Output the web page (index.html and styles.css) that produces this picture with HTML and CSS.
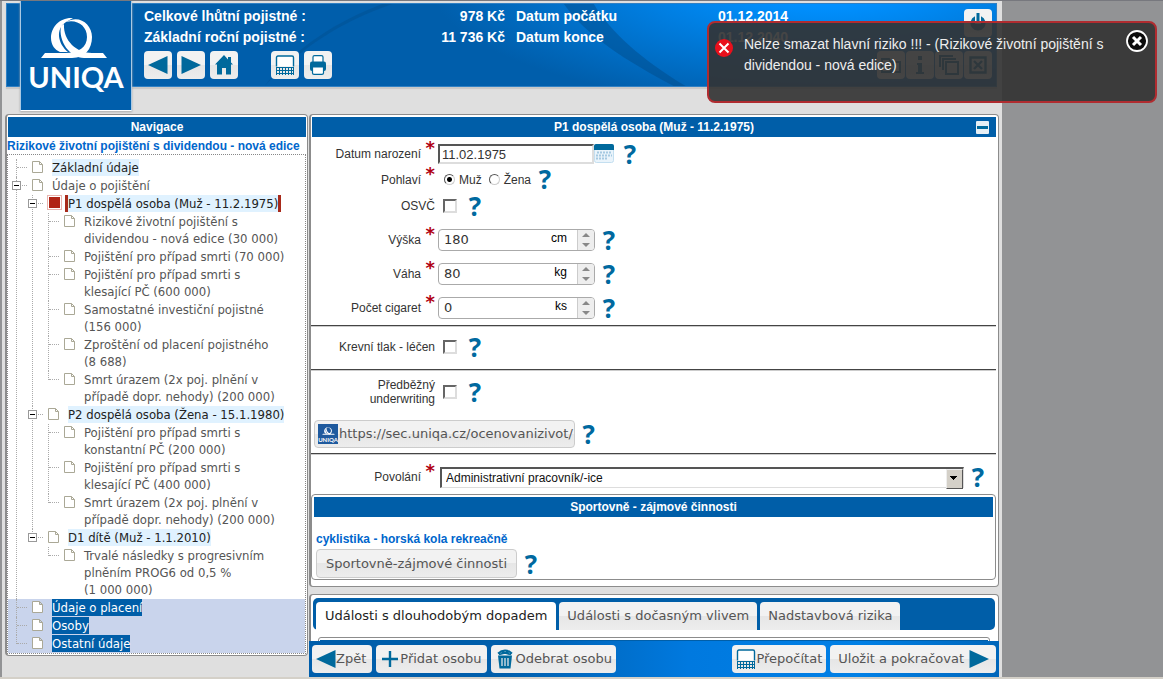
FILE: index.html
```html
<!DOCTYPE html>
<html lang="cs">
<head>
<meta charset="utf-8">
<title>UNIQA – Rizikové životní pojištění</title>
<link rel="stylesheet" href="styles.css">
</head>
<body>
<svg class="defs" aria-hidden="true">
  <symbol id="doc" viewBox="0 0 12 12"><path d="M.5 .5H7.500L10.500 3.500V11.500H.5ZM7.500 .5V3.500H10.500" fill="#fff" stroke="#aaa896"/></symbol>
  <symbol id="grid" viewBox="0 0 20 20"><path d="M1.500 11.500V2.500Q1.500 1 3 1H17Q18.500 1 18.500 2.500V11.500" fill="#fff" stroke="#00699c" stroke-width="1.400"/><path d="M1 12.500H19M1 15.500H19M1 18.500H19M1.500 12V20M4.500 12V20M7.500 12V20M10.500 12V20M13.500 12V20M16.500 12V20M18.500 12V20" stroke="#00699c"/></symbol>
  <symbol id="left" viewBox="0 0 20 20"><path d="M0 10L19.500 1V19Z" fill="#00699c"/></symbol>
  <symbol id="right" viewBox="0 0 20 20"><path d="M20 10L.5 1V19Z" fill="#00699c"/></symbol>
  <symbol id="loop" viewBox="0 0 66 42"><path d="M25 5C38-3 51 7 51 20C51 32 44 41 31 41H0L4 36H24C38 36 46 30 46 20C46 9 36 2 25 5Z"/><path d="M32 1C19 0 10 10 10 21C10 28 14 33 19 35L27 35C17 27 14 12 25 5Z"/><path d="M20 9C17 24 29 41 43 41H66L62 36H51C36 36 22 24 23 7Z"/></symbol>
</svg>

<div class="shell">
  <header class="header">
    <svg class="swoosh" viewBox="0 0 991 84" preserveAspectRatio="none" aria-hidden="true">
      <path d="M558 0H588C604 28 637 58 680 84H668C620 58 580 32 558 0Z" fill="#004a86" opacity=".45"/>
      <path d="M258 84C296 44 335 18 386 0H376C330 18 290 44 258 84Z" fill="#004a86" opacity=".35"/>
    </svg>
    <a class="logo" href="#" aria-label="UNIQA">
      <svg viewBox="0 0 110 109"><use href="#loop" x="20" y="16" width="66" height="42" fill="#fff"/><text x="55" y="87" text-anchor="middle" class="logo-text">UNIQA</text></svg>
    </a>
    <div class="header-main">
      <div class="summary">
        <span>Celkové lhůtní pojistné :</span><span class="amount">978 Kč</span><span>Datum počátku</span><span>01.12.2014</span>
        <span>Základní roční pojistné :</span><span class="amount">11 736 Kč</span><span>Datum konce</span><span>01.12.2040</span>
      </div>
      <div class="tools">
        <button class="btn icon-btn" aria-label="Zpět"><svg class="ico"><use href="#left"/></svg></button>
        <button class="btn icon-btn" aria-label="Vpřed"><svg class="ico"><use href="#right"/></svg></button>
        <button class="btn icon-btn" aria-label="Domů"><svg class="ico" viewBox="0 0 20 20"><path d="M10 0L1 9.500H3V19.500H8V13H12V19.500H17V9.500H19L17 7.500V2H14V4.500Z" fill="#00699c"/></svg></button>
        <button class="btn icon-btn spaced" aria-label="Kalkulačka"><svg class="ico"><use href="#grid"/></svg></button>
        <button class="btn icon-btn" aria-label="Tisk"><svg class="ico" viewBox="0 0 20 20"><path d="M5 7V2Q5 .7 6.500 .7H13.500Q15 .7 15 2V7" fill="#fff" stroke="#00699c" stroke-width="1.200"/><path d="M2 8.500Q2 6.500 4 6.500H16Q18 6.500 18 8.500V14Q18 16 16 16H4Q2 16 2 14Z" fill="#00699c"/><path d="M4.500 12H15.500V18Q15.500 19.300 14 19.300H6Q4.500 19.300 4.500 18Z" fill="#fff" stroke="#00699c" stroke-width="1.200"/></svg></button>
      </div>
    </div>
    <div class="corner">
      <button class="btn icon-btn" aria-label="Odhlásit"><svg class="ico" viewBox="0 0 20 20"><path d="M7 3.200A7.500 7.500 0 1 0 13 3.200V11H7Z" fill="#00699c"/><path d="M10 0V10" stroke="#00699c" stroke-width="3"/></svg></button>
      <div class="corner-row">
        <button class="btn icon-btn" aria-label="Složka"><svg class="ico" viewBox="0 0 20 20"><path d="M1 4H8L10 7H19V17H1Z" fill="none" stroke="#00699c" stroke-width="2"/><circle cx="11" cy="12" r="3" fill="none" stroke="#00699c" stroke-width="2"/></svg></button>
        <button class="btn icon-btn" aria-label="Informace"><svg class="ico" viewBox="0 0 20 20"><path d="M7 8H12V17H14V19H6V17H8V10H7ZM8 1H12V5H8Z" fill="#00699c"/></svg></button>
        <button class="btn icon-btn" aria-label="Kopie"><svg class="ico" viewBox="0 0 20 20"><path d="M1 12V1H14M4 15V4H17M7 7H19V19H7Z" fill="none" stroke="#00699c" stroke-width="2"/></svg></button>
        <button class="btn icon-btn" aria-label="Zavřít"><svg class="ico" viewBox="0 0 20 20"><path d="M2.500 2.500H17.500V17.500H2.500ZM6 6L14 14M14 6L6 14" fill="none" stroke="#00699c" stroke-width="2.400"/></svg></button>
      </div>
    </div>
  </header>

  <div class="columns">
    <nav class="panel nav">
      <h2 class="bar">Navigace</h2>
      <p class="product">Rizikové životní pojištění s dividendou - nová edice</p>
      <ul class="tree">
        <li><div class="row"><svg class="doc"><use href="#doc"/></svg><a class="hl" href="#">Základní údaje</a></div></li>
        <li><div class="row"><button class="toggle" aria-label="Sbalit"></button><svg class="doc"><use href="#doc"/></svg><a href="#">Údaje o pojištění</a></div>
          <ul>
            <li><div class="row"><button class="toggle" aria-label="Sbalit"></button><span class="mark"></span><a class="hl current" href="#">P1 dospělá osoba (Muž - 11.2.1975)</a></div>
              <ul>
                <li><div class="row"><svg class="doc"><use href="#doc"/></svg><a href="#">Rizikové životní pojištění s<br>dividendou - nová edice (30 000)</a></div></li>
                <li><div class="row"><svg class="doc"><use href="#doc"/></svg><a href="#">Pojištění pro případ smrti (70 000)</a></div></li>
                <li><div class="row"><svg class="doc"><use href="#doc"/></svg><a href="#">Pojištění pro případ smrti s<br>klesající PČ (600 000)</a></div></li>
                <li><div class="row"><svg class="doc"><use href="#doc"/></svg><a href="#">Samostatné investiční pojistné<br>(156 000)</a></div></li>
                <li><div class="row"><svg class="doc"><use href="#doc"/></svg><a href="#">Zproštění od placení pojistného<br>(8 688)</a></div></li>
                <li><div class="row"><svg class="doc"><use href="#doc"/></svg><a href="#">Smrt úrazem (2x poj. plnění v<br>případě dopr. nehody) (200 000)</a></div></li>
              </ul>
            </li>
            <li><div class="row"><button class="toggle" aria-label="Sbalit"></button><svg class="doc"><use href="#doc"/></svg><a class="hl" href="#">P2 dospělá osoba (Žena - 15.1.1980)</a></div>
              <ul>
                <li><div class="row"><svg class="doc"><use href="#doc"/></svg><a href="#">Pojištění pro případ smrti s<br>konstantní PČ (200 000)</a></div></li>
                <li><div class="row"><svg class="doc"><use href="#doc"/></svg><a href="#">Pojištění pro případ smrti s<br>klesající PČ (400 000)</a></div></li>
                <li><div class="row"><svg class="doc"><use href="#doc"/></svg><a href="#">Smrt úrazem (2x poj. plnění v<br>případě dopr. nehody) (200 000)</a></div></li>
              </ul>
            </li>
            <li><div class="row"><button class="toggle" aria-label="Sbalit"></button><svg class="doc"><use href="#doc"/></svg><a class="hl" href="#">D1 dítě (Muž - 1.1.2010)</a></div>
              <ul>
                <li><div class="row"><svg class="doc"><use href="#doc"/></svg><a href="#">Trvalé následky s progresivním<br>plněním PROG6 od 0,5 %<br>(1 000 000)</a></div></li>
              </ul>
            </li>
          </ul>
        </li>
        <li class="picked"><div class="row"><svg class="doc"><use href="#doc"/></svg><a href="#">Údaje o placení</a></div></li>
        <li class="picked"><div class="row"><svg class="doc"><use href="#doc"/></svg><a href="#">Osoby</a></div></li>
        <li class="picked"><div class="row"><svg class="doc"><use href="#doc"/></svg><a href="#">Ostatní údaje</a></div></li>
      </ul>
    </nav>

    <main class="main">
      <div class="scroll">
        <section class="panel person">
          <h2 class="bar">P1 dospělá osoba (Muž - 11.2.1975)<button class="collapse" aria-label="Sbalit"></button></h2>
          <form class="form">
            <div class="field birth"><label for="birth">Datum narození<b class="req">*</b></label>
              <input class="sunken date" id="birth" type="text" value="11.02.1975">
              <button type="button" class="plain cal" aria-label="Kalendář"><svg width="20" height="20" viewBox="0 0 20 20"><rect x=".5" y=".5" width="19" height="18" rx="2" fill="#eaf4fb" stroke="#c4dff0"/><path d="M0 6V2Q0 0 2 0H18Q20 0 20 2V6Z" fill="#00699c"/><path d="M3 8.500H18M2 11.500H18M2 14.500H14" stroke="#a5c9e2" stroke-width="2" stroke-dasharray="2 1"/></svg></button>
              <button type="button" class="help" aria-label="Nápověda">?</button></div>
            <div class="field sex"><span class="label">Pohlaví<b class="req">*</b></span>
              <label class="opt"><input type="radio" name="sex" checked>Muž</label>
              <label class="opt"><input type="radio" name="sex">Žena</label>
              <button type="button" class="help" aria-label="Nápověda">?</button></div>
            <div class="field"><label for="osvc">OSVČ</label><input type="checkbox" id="osvc"><button type="button" class="help" aria-label="Nápověda">?</button></div>
            <div class="field"><label for="height">Výška<b class="req">*</b></label>
              <span class="spin"><input id="height" type="text" value="180"><span class="unit">cm</span><span class="steps"><button type="button" aria-label="Více"></button><button type="button" class="down" aria-label="Méně"></button></span></span>
              <button type="button" class="help" aria-label="Nápověda">?</button></div>
            <div class="field"><label for="weight">Váha<b class="req">*</b></label>
              <span class="spin"><input id="weight" type="text" value="80"><span class="unit">kg</span><span class="steps"><button type="button" aria-label="Více"></button><button type="button" class="down" aria-label="Méně"></button></span></span>
              <button type="button" class="help" aria-label="Nápověda">?</button></div>
            <div class="field"><label for="cig">Počet cigaret<b class="req">*</b></label>
              <span class="spin"><input id="cig" type="text" value="0"><span class="unit">ks</span><span class="steps"><button type="button" aria-label="Více"></button><button type="button" class="down" aria-label="Méně"></button></span></span>
              <button type="button" class="help" aria-label="Nápověda">?</button></div>
            <hr>
            <div class="field tall pressure"><label for="bp">Krevní tlak - léčen</label><input type="checkbox" id="bp"><button type="button" class="help" aria-label="Nápověda">?</button></div>
            <hr>
            <div class="field tall"><label for="uw">Předběžný underwriting</label><input type="checkbox" id="uw"><button type="button" class="help" aria-label="Nápověda">?</button></div>
            <div class="link-row">
              <button type="button" class="btn bordered url"><svg width="20" height="20" viewBox="0 0 20 20"><rect width="20" height="20" fill="#1f5a9e"/><use href="#loop" x="4" y="3" width="13" height="8" fill="#fff"/><text x="10" y="18" text-anchor="middle" class="mini-text">UNIQA</text></svg>https://sec.uniqa.cz/ocenovanizivot/</button>
              <button type="button" class="help" aria-label="Nápověda">?</button></div>
            <hr>
            <div class="field job"><label for="job">Povolání<b class="req">*</b></label>
              <span class="select-box"><select class="sunken" id="job"><option>Administrativní pracovník/-ice</option></select></span>
              <button type="button" class="help" aria-label="Nápověda">?</button></div>
          </form>
          <section class="panel sports">
            <h3 class="bar">Sportovně - zájmové činnosti</h3>
            <p>cyklistika - horská kola rekreačně</p>
            <div class="sports-row"><button class="btn bordered wide">Sportovně-zájmové činnosti</button><button class="help" aria-label="Nápověda">?</button></div>
          </section>
        </section>
        <section class="panel events">
          <div class="tabs" role="tablist">
            <button class="btn tab active" role="tab" aria-selected="true">Události s dlouhodobým dopadem</button>
            <button class="btn tab" role="tab">Události s dočasným vlivem</button>
            <button class="btn tab" role="tab">Nadstavbová rizika</button>
          </div>
          <div class="panel inner"><div class="bar"></div></div>
        </section>
      </div>
      <footer class="actions">
        <button class="btn back"><svg class="ico"><use href="#left"/></svg>Zpět</button>
        <button class="btn back"><svg class="ico" viewBox="0 0 20 20"><path d="M10 2V18M2 10H18" stroke="#00699c" stroke-width="2.400"/></svg>Přidat osobu</button>
        <button class="btn"><svg class="ico" viewBox="0 0 20 20"><path d="M3 6.500H17L15.500 19.500H4.500Z" fill="#00699c"/><path d="M3 4.500Q10-1.500 17 4.500M5 2.500L16 5.500M15 2.500L4 5.500" fill="none" stroke="#00699c" stroke-width="1.800"/><path d="M7 9V17M10 9V17M13 9V17" stroke="#eee" stroke-width="1.200"/></svg>Odebrat osobu</button>
        <button class="btn push"><svg class="ico"><use href="#grid"/></svg>Přepočítat</button>
        <button class="btn save">Uložit a pokračovat<svg class="ico"><use href="#right"/></svg></button>
      </footer>
    </main>
  </div>
</div>

<div class="toast" role="alert">
  <svg class="error" viewBox="0 0 18 18"><circle cx="9" cy="9" r="9" fill="#e9101c"/><path d="M4.500 4.500L13.500 13.500M13.500 4.500L4.500 13.500" stroke="#fff" stroke-width="2"/></svg>
  <p>Nelze smazat hlavní riziko !!! - (Rizikové životní pojištění s dividendou - nová edice)</p>
  <button class="plain close" aria-label="Zavřít"><svg width="22" height="22" viewBox="0 0 22 22"><circle cx="11" cy="11" r="10" fill="#0c0c0c" stroke="#fff" stroke-width="1.800"/><path d="M7 7L15 15M15 7L7 15" stroke="#fff" stroke-width="3"/></svg></button>
</div>
</body>
</html>
```
FILE: styles.css
```css
* { box-sizing: border-box; }
body {
  margin: 0;
  height: 100vh;
  overflow: hidden;
  position: relative;
  display: flex;
  border-top: 1px solid #77787e;
  border-bottom: 2px solid #d4d0c8;
  background: #929395;
  font: 12px/14px "Liberation Sans", Arial, sans-serif;
  color: #333;
}
h2, h3, p, ul { margin: 0; padding: 0; }
button, input, select { font: inherit; color: inherit; }
.defs { position: absolute; width: 0; height: 0; }

.shell {
  flex: 1;
  max-width: 1000px;
  margin-left: 2px;
  padding: 2px 3px 0;
  display: flex;
  flex-direction: column;
  background: #dfdfdf;
}

/* Header */
.header {
  position: relative;
  display: flex;
  flex: none;
  min-height: 84px;
  margin: 0 2px 27px 1px;
  padding: 2px 4px 5px 137px;
  border: 1px solid #2f80c4;
  background: radial-gradient(ellipse 400px 130px at 83% -30%, #0090ff 20%, #005eab 100%);
  box-shadow: 0 2px 1px #c8c8c8;
}
.swoosh { position: absolute; inset: 0; width: 100%; height: 100%; }
.logo {
  position: absolute;
  left: 13px;
  top: -3px;
  width: 112px;
  height: 110px;
  border: 1px solid #a9c9e4;
  border-bottom-color: #fff;
  border-top: 0;
  background: #005eab;
  box-shadow: 0 1px 2px #aaa;
}
.logo svg { display: block; width: 100%; }
.logo-text { font: 700 29px Lato, sans-serif; fill: #fff; }
.mini-text { font: 700 6px Lato, sans-serif; fill: #fff; }
.header-main { position: relative; flex: 1; }
.summary {
  display: grid;
  grid-template-columns: 180px 170px 191px 1fr;
  column-gap: 11px;
  font-size: 14px;
  font-weight: 700;
  line-height: 21px;
  color: #fff;
}
.amount { text-align: right; }
.tools { display: flex; gap: 5px; margin-top: 3px; }
.spaced { margin-left: 28px; }
.corner {
  position: relative;
  display: flex;
  flex-direction: column;
  justify-content: space-between;
  align-items: flex-end;
  padding: 3px 0 2px;
}
.corner-row { display: flex; gap: 1px; }

/* Buttons */
.btn {
  display: flex;
  align-items: center;
  height: 28px;
  padding: 0 5px;
  border: 0;
  border-radius: 4px;
  background: linear-gradient(#f2f2f2 50%, #e6e6e6 50%, #ededed);
  font: 13px/16px "DejaVu Sans", Verdana, sans-serif;
  color: #555;
  white-space: nowrap;
}
.icon-btn { width: 28px; padding: 0; justify-content: center; }
.ico { width: 20px; height: 20px; flex: none; }
.bordered { border: 1px solid #ccc; }
.plain { padding: 0; border: 0; background: none; }
.plain svg { display: block; }
.help {
  width: 18px;
  padding: 0;
  border: 0;
  background: none;
  font: 700 26px/26px "Open Sans", sans-serif;
  color: #00699f;
}

/* Panels */
.columns {
  flex: 1;
  min-height: 0;
  display: grid;
  grid-template-columns: 303px minmax(0, 1fr);
  gap: 1px;
  align-items: start;
}
.panel {
  border: 1px solid #8c8c8c;
  border-left-width: 2px;
  border-radius: 4px;
  background: #fff;
}
.bar {
  position: relative;
  min-height: 20px;
  background: #005ea8;
  font-size: 12px;
  font-weight: 700;
  line-height: 20px;
  text-align: center;
  color: #fff;
}
.collapse {
  position: absolute;
  right: 7px;
  top: 4px;
  width: 13px;
  height: 13px;
  padding: 0;
  border: solid #e6eff5;
  border-width: 5px 1px;
  border-radius: 1px;
  background: #00699c;
}

/* Navigation tree */
.nav { padding: 2px 1px 1px 0; }
.nav .bar { margin-left: 1px; }
.product { padding-top: 1px; font-weight: 700; line-height: 16px; color: #0066cc; white-space: nowrap; }
.tree {
  border: 1px dotted #888;
  padding-top: 4px;
  font: 13px/17px "DejaVu Sans Condensed", Tahoma, sans-serif;
  color: #555;
}
.tree li { position: relative; list-style: none; }
.tree ul { padding-left: 16px; }
.tree li::before {
  content: "";
  position: absolute;
  left: 8px;
  top: 0;
  height: 100%;
  border-left: 1px dotted #aaa;
}
.tree li:last-child::before { height: 9px; }
.tree li::after {
  content: "";
  position: absolute;
  left: 9px;
  top: 8px;
  width: 10px;
  border-top: 1px dotted #aaa;
}
.row { display: flex; align-items: flex-start; padding: 0 0 1px 24px; white-space: nowrap; }
.doc { width: 12px; height: 12px; margin: 2px 8px 0 0; flex: none; }
.tree a { color: inherit; text-decoration: none; }
.tree .hl { background: #e0f2ff; color: #222; }
.tree .current {
  margin-left: -3px;
  border: solid #a82a1a;
  border-width: 0 3px;
}
.mark {
  width: 15px;
  height: 15px;
  margin: 0 6px 0 -1px;
  border: 1px solid #e8b4ae;
  background: #b02416;
  box-shadow: inset 0 0 0 1px #fff;
}
.toggle {
  position: absolute;
  z-index: 1;
  left: 4px;
  top: 4px;
  width: 9px;
  height: 9px;
  padding: 0;
  border: 1px solid #999;
  background: linear-gradient(#000, #000) center / 5px 1px no-repeat #fff;
}
.tree .picked { background: #c9d4ec; }
.tree .picked a { background: #005ea8; color: #fff; }

/* Form */
.main { display: flex; flex-direction: column; height: 100%; min-height: 0; }
.scroll { flex: 1; min-height: 0; overflow: hidden; }
.person { padding: 2px 2px 6px 1px; }
.form { padding-top: 1px; }
.field { display: flex; align-items: center; min-height: 34px; }
.field > label:first-child, .label {
  display: flex;
  justify-content: flex-end;
  width: 123px;
  margin-right: 3px;
  text-align: right;
  flex: none;
}
.req {
  height: 14px;
  margin: -5px 0 5px 4px;
  width: 10px;
  font: 700 18px/12px "DejaVu Sans", sans-serif;
  color: #b00012;
}
.birth { min-height: 32px; }
.sex { min-height: 19px; }
.sex .help { line-height: 19px; }
.sunken {
  height: 20px;
  border: 2px solid;
  border-color: #555 #ddd #ddd #555;
  border-radius: 0;
  background: #fff;
}
.date { width: 156px; padding: 0 2px; font-size: 13px; }
.cal { margin-right: 7px; }
.opt { display: flex; align-items: center; gap: 4px; margin-right: 7px; }
.opt input, .field > input[type="checkbox"] { appearance: none; flex: none; margin: 0; background: #fff; }
.opt input {
  width: 11px;
  height: 11px;
  border: 1px solid;
  border-color: #555 #ccc #ccc #555;
  border-radius: 50%;
}
.field.sex .label { margin-right: 9px; }
.opt + .opt { margin-right: 5px; }
.opt input:checked { background: radial-gradient(#000 2px, #fff 3px); }
.field > input[type="checkbox"] {
  width: 14px;
  height: 14px;
  margin: 0 9px 0 5px;
  border: 2px solid;
  border-color: #666 #ddd #ddd #666;
}
.spin {
  display: flex;
  width: 157px;
  height: 22px;
  margin-right: 5px;
  border: 1px solid #aaa;
  border-radius: 4px;
  overflow: hidden;
}
.spin input {
  flex: 1;
  min-width: 0;
  padding: 0 5px;
  border: 0;
  background: none;
  font: 13px/20px "DejaVu Sans", Verdana, sans-serif;
}
.unit { margin-right: 10px; line-height: 17px; color: #000; }
.steps { display: flex; flex-direction: column; width: 17px; border-left: 1px solid #ccc; background: #eee; }
.steps button { flex: 1; padding: 0; border: 0; background: none; display: grid; place-items: center; }
.steps button::after {
  content: "";
  border: 4px solid transparent;
  border-top: 0;
  border-bottom: 4px solid #888;
}
.steps .down::after { border-top: 4px solid #888; border-bottom: 0; }
hr { height: 2px; margin: 0 0 0 -1px; border: 0; border-top: 1px solid #444; border-bottom: 1px solid #ccc; }
.tall { min-height: 42px; }
.pressure { padding-bottom: 3px; }
.link-row { display: flex; align-items: center; gap: 5px; padding: 7px 0 5px 2px; }
.url { padding: 0 1px 0 3px; }
.url svg { margin-right: 1px; }
.job { min-height: 39px; padding-top: 5px; }
.select-box { position: relative; display: flex; flex: 1; max-width: 524px; margin: 0 5px 0 2px; }
.select-box select { appearance: none; width: 100%; height: 21px; padding: 0 4px; border-width: 2px 1px 1px 2px; color: #111; }
.select-box::after {
  content: "";
  position: absolute;
  right: 1px;
  top: 2px;
  width: 15px;
  height: 18px;
  border: 1px solid;
  border-color: #eee #555 #555 #eee;
  background:
    linear-gradient(#000, #000) 3px 6px / 7px 1px no-repeat,
    linear-gradient(#000, #000) 4px 7px / 5px 1px no-repeat,
    linear-gradient(#000, #000) 5px 8px / 3px 1px no-repeat,
    linear-gradient(#000, #000) 6px 9px / 1px 1px no-repeat #d4d0c8;
  pointer-events: none;
}
.sports { margin-left: -1px; padding: 2px 2px 1px 2px; border-left-width: 1px; }
.sports p { margin-top: 14px; padding: 0 2px; font-weight: 700; line-height: 16px; color: #0066cc; }
.sports-row { display: flex; align-items: center; gap: 5px; padding-left: 2px; margin-top: 2px; }
.wide { padding: 0 9px; height: 29px; }

/* Event tabs */
.events { margin-top: 7px; padding: 3px 3px 0 2px; }
.tabs { display: flex; gap: 3px; height: 32px; padding: 4px 3px 0; border-radius: 5px; background: #005ea8; }
.tab { border-radius: 4px 4px 0 0; padding: 0 8px; }
.tab.active { background: #fff; color: #222; padding: 0 9px; }
.inner { margin: 7px 5px 0; padding: 2px 1px; border-left-width: 1px; border-radius: 3px 3px 0 0; }

/* Bottom actions */
.actions {
  display: flex;
  flex: none;
  gap: 4px;
  min-height: 36px;
  padding: 4px 3px;
  background: linear-gradient(90deg, #005eab 28%, #0079df 55%, #0080e6 80%, #0066ba);
}
.actions .btn { padding: 0 4px; }
.actions .back { padding-right: 6px; }
.actions .push { margin-left: auto; }
.actions .save { gap: 5px; padding: 0 7px 0 8px; }

/* Notification */
.toast {
  position: absolute;
  top: 20px;
  right: 6px;
  display: flex;
  align-items: flex-start;
  width: 450px;
  min-height: 82px;
  padding: 7px 7px 7px 6px;
  border: 2px solid #b02c30;
  border-radius: 8px;
  background: rgba(51, 51, 51, .91);
  color: #eee;
  font-size: 14px;
  line-height: 21px;
}
.toast p { flex: 1; margin: 4px 18px 0 11px; }
.error { width: 18px; height: 18px; margin-top: 9px; flex: none; }
```
